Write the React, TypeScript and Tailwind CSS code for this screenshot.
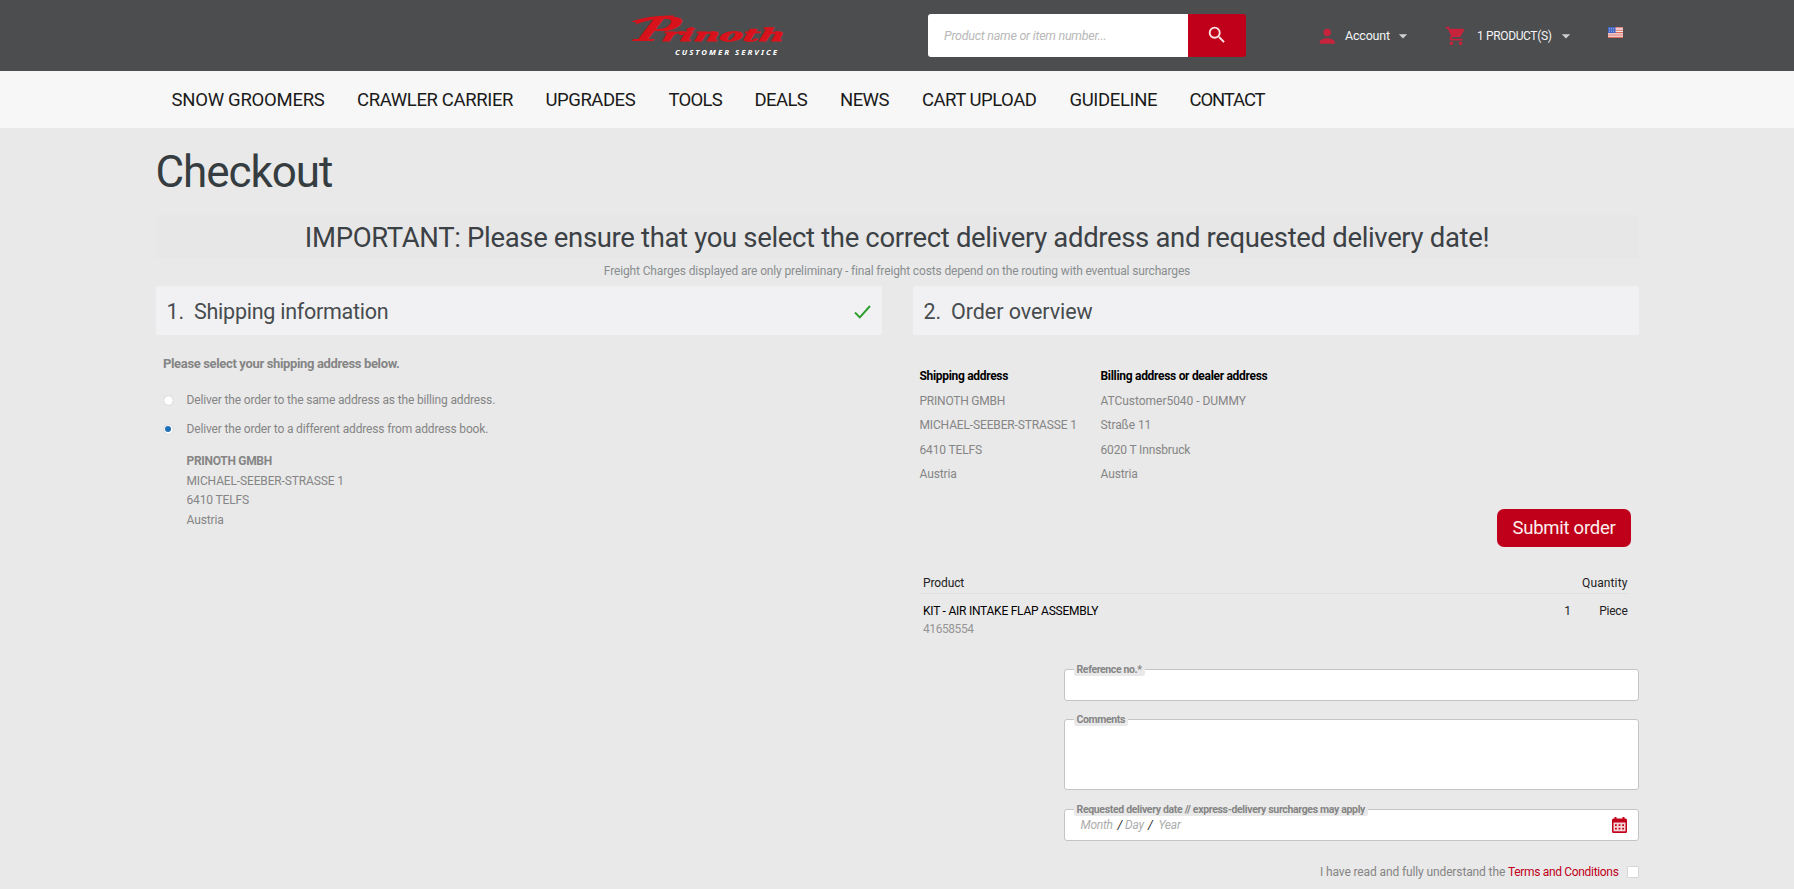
import { FC, ReactNode, useState } from "react";
import { MdArrowDropDown, MdPerson, MdSearch, MdShoppingCart } from "react-icons/md";

interface StepHeaderProps {
    title: string;
    number: string;
    titleClass: string;
    done?: boolean;
}

interface FieldProps {
    label: string;
    labelClass: string;
    className: string;
    children?: ReactNode;
}

const menu = [
    { label: "SNOW GROOMERS", className: "w-[185.5px] tracking-[-0.014em]" },
    { label: "CRAWLER CARRIER", className: "w-[188.5px] tracking-[-0.020em]" },
    { label: "UPGRADES", className: "w-[123px] tracking-[-0.025em]" },
    { label: "TOOLS", className: "w-[86px] tracking-[-0.040em]" },
    { label: "DEALS", className: "w-[85.5px] tracking-[-0.033em]" },
    { label: "NEWS", className: "w-[82px] tracking-[-0.030em]" },
    { label: "CART UPLOAD", className: "w-[147.5px] tracking-[-0.027em]" },
    { label: "GUIDELINE", className: "w-[120px] tracking-[-0.020em]" },
    { label: "CONTACT", className: "w-[80px] tracking-[-0.060em]" },
];

const shippingAddress = [
    { text: "PRINOTH GMBH", className: "tracking-[-0.018em]" },
    { text: "MICHAEL-SEEBER-STRASSE 1", className: "tracking-[-0.012em]" },
    { text: "6410 TELFS", className: "tracking-[-0.012em]" },
    { text: "Austria", className: "tracking-[-0.010em]" },
];

const billingAddress = [
    { text: "ATCustomer5040 - DUMMY", className: "tracking-[-0.003em]" },
    { text: "Straße 11", className: "tracking-[-0.006em]" },
    { text: "6020 T Innsbruck", className: "tracking-[-0.012em]" },
    { text: "Austria", className: "tracking-[-0.010em]" },
];

const Logo: FC = () => (
    <svg width="160" height="58" viewBox="0 -14 160 58" className="shrink-0">
        <g fill="#d8121a">
            <path d="M1 7.500C14 3 28 1 44 1.500L43 4C28 3.800 16 6.500 6 10.500L6.500 8.500Z" />
            <text transform="translate(3 26.500) skewX(-24)" textLength="40" lengthAdjust="spacingAndGlyphs" fontFamily="DejaVu Serif" fontWeight="700" fontStyle="italic" fontSize="33">P</text>
            <text transform="translate(31 26.500) skewX(-12)" textLength="123" lengthAdjust="spacingAndGlyphs" fontFamily="DejaVu Serif" fontWeight="700" fontStyle="italic" fontSize="17.500" stroke="#d8121a" strokeWidth=".8">rinoth</text>
        </g>
        <text x="45" y="41" textLength="102" fontFamily="Noto Sans" fontWeight="700" fontStyle="italic" fontSize="7.800" fill="#fff">CUSTOMER SERVICE</text>
    </svg>
);

const Flag: FC = () => (
    <svg width="15" height="11" viewBox="0 0 15 11" className="mt-[27px]">
        <rect width="15" height="11" fill="#f3e6e4" />
        <path d="M0 .8H15M0 3.2H15M0 5.6H15M0 8H15M0 10.4H15" stroke="#dd6a62" strokeWidth="1.1" />
        <rect width="7.5" height="6" fill="#4467c4" />
        <path d="M1 1.5H7M1 3H7M1 4.5H7" stroke="#a9baf0" strokeWidth=".6" strokeDasharray="1 1" />
    </svg>
);

const CalendarIcon: FC = () => (
    <svg width="15" height="16" viewBox="0 0 15 16">
        <path d="M2.500 0h2v1.500h6V0h2v1.500h1A1.500 1.500 0 0 1 15 3v11.500a1.500 1.500 0 0 1-1.500 1.500h-12A1.500 1.500 0 0 1 0 14.500V3a1.500 1.500 0 0 1 1.500-1.500h1Z" fill="#c1001a" />
        <rect x="1.500" y="5.500" width="12" height="8.800" fill="#f6d5d8" />
        <path d="M3 8.200h9M3 11.600h9" stroke="#c1001a" strokeWidth="1.800" strokeDasharray="1.800 1.800" />
    </svg>
);

const StepHeader: FC<StepHeaderProps> = ({ title, number, titleClass, done }) => (
    <div className="flex h-[49px] items-center rounded-[2px] bg-[#f1f1f3] pt-[2px] pr-[11px] pl-[11px] text-[21.5px] leading-[47px] text-[#474c4f]">
        <span className="w-[27.5px]">{number}</span>
        <h2 className={titleClass}>{title}</h2>
        {done && (
            <svg width="17" height="14" viewBox="0 0 17 14" className="ml-auto">
                <path d="M1 7.500L5.800 12.300L16 1" fill="none" stroke="#2a9d2a" strokeWidth="1.900" />
            </svg>
        )}
    </div>
);

const Field: FC<FieldProps> = ({ label, labelClass, className, children }) => (
    <div className={`relative rounded-[3px] border border-[#c4c4c4] bg-white ${className}`}>
        <label className={`absolute -top-[7px] left-[9px] rounded-[2px] bg-[#e9e9e9] px-[3px] text-[10.5px] leading-[13px] font-bold whitespace-nowrap text-[#858585] ${labelClass}`}>{label}</label>
        {children}
    </div>
);

const App: FC = () => {
    const [delivery, setDelivery] = useState("different");

    const radio = (value: string) => (
        <button
            title={value}
            onClick={() => setDelivery(value)}
            className="mr-[14px] ml-[8px] flex size-[9px] items-center justify-center rounded-full bg-white shadow-[0_0_1px_#999]">
            {delivery === value && <span className="size-[6px] rounded-full bg-[#1f6fb8]" />}
        </button>
    );

    return (
        <div className="h-[889px] w-[1794px] overflow-hidden bg-[#e9e9e9] font-['Roboto',sans-serif] text-[12px] text-[#858585]">
            <header className="flex h-[71px] bg-[#4b4d4f] pl-[630px] text-[#f4f4f4]">
                <Logo />
                <form className="mt-[14px] ml-[138px] flex h-[43px] w-[318px] overflow-hidden rounded-[3px]">
                    <input placeholder="Product name or item number..." className="w-[260px] bg-white pt-[2px] pl-4 text-[12.5px] tracking-[-0.021em] text-[#555] italic outline-none placeholder:text-[#b8b8b8]" />
                    <button type="button" title="Search" className="flex flex-1 items-center justify-center bg-[#c0001a]">
                        <MdSearch size={22} className="-mt-[2px] -ml-[1px] text-[#fbe4e6]" />
                    </button>
                </form>
                <div className="ml-[70px] flex h-[72px] items-center">
                    <MdPerson size={22.500} className="text-[#c8233c]" />
                    <span className="ml-[6.500px] w-[48px] text-[12.5px] tracking-[-0.015em]">Account</span>
                    <MdArrowDropDown size={20} className="text-[#d0d0d0]" />
                </div>
                <div className="ml-[32px] flex h-[72px] items-center">
                    <MdShoppingCart size={22} className="text-[#c8233c]" />
                    <span className="ml-[10px] w-[79px] tracking-[-0.030em]">1 PRODUCT(S)</span>
                    <MdArrowDropDown size={20} className="text-[#d0d0d0]" />
                </div>
                <div className="ml-[32px]">
                    <Flag />
                </div>
            </header>

            <nav className="flex h-[57px] bg-[#f7f7f7] pl-[171.500px] text-[18.5px] leading-[59px] whitespace-nowrap text-[#1a1a1a]">
                {menu.map((item) => (
                    <a key={item.label} href="#" className={item.className}>{item.label}</a>
                ))}
            </nav>

            <main className="mx-auto w-[1483px]">
                <h1 className="pt-[17px] text-[44px] leading-[54px] tracking-[-0.024em] text-[#353d41]">Checkout</h1>
                <div className="mt-4 h-[43px] bg-[#e7e7e7] text-center text-[27.5px] leading-[45px] tracking-[-0.0125em] whitespace-nowrap text-[#3c4145]">
                    IMPORTANT: Please ensure that you select the correct delivery address and requested delivery date!
                </div>
                <p className="h-[28px] text-center leading-[27px] tracking-[-0.012em] text-[#8a8e90]">
                    Freight Charges displayed are only preliminary - final freight costs depend on the routing with eventual surcharges
                </p>

                <div className="grid grid-cols-2 gap-[31px]">
                    <section>
                        <StepHeader number="1." title="Shipping information" titleClass="tracking-[-0.012em]" done />
                        <p className="mt-[19px] pl-[7.500px] text-[13px] leading-5 font-bold tracking-[-0.027em]">Please select your shipping address below.</p>
                        <div className="mt-4 flex items-center leading-5">
                            {radio("same")}
                            <span className="tracking-[-0.013em]">Deliver the order to the same address as the billing address.</span>
                        </div>
                        <div className="mt-[9px] flex items-center leading-5">
                            {radio("different")}
                            <span className="tracking-[-0.013em]">Deliver the order to a different address from address book.</span>
                        </div>
                        <div className="mt-[13px] pl-[31px] leading-[19.500px]">
                            <p className="font-bold tracking-[-0.025em]">PRINOTH GMBH</p>
                            {shippingAddress.slice(1).map((line) => (
                                <p key={line.text} className={line.className}>{line.text}</p>
                            ))}
                        </div>
                    </section>

                    <section>
                        <StepHeader number="2." title="Order overview" titleClass="tracking-[-0.003em]" />
                        <div className="mt-[29px] flex pl-[7px] leading-[24.500px]">
                            <div className="w-[181px]">
                                <p className="font-bold tracking-[-0.026em] text-black">Shipping address</p>
                                {shippingAddress.map((line) => (
                                    <p key={line.text} className={line.className}>{line.text}</p>
                                ))}
                            </div>
                            <div>
                                <p className="font-bold tracking-[-0.025em] text-black">Billing address or dealer address</p>
                                {billingAddress.map((line) => (
                                    <p key={line.text} className={line.className}>{line.text}</p>
                                ))}
                            </div>
                        </div>
                        <div className="mt-[22px] flex justify-end pr-[7.500px]">
                            <button className="h-[38px] w-[134px] rounded-[7px] bg-[#c0001a] pt-[2px] text-[18.5px] tracking-[-0.014em] text-[#fdeeee]">Submit order</button>
                        </div>
                        <div className="mt-[26px] pr-[11px] pl-[7px] leading-5 text-[#222]">
                            <div className="flex justify-between border-b border-[#e0e0e0] pl-[3.500px]">
                                <span className="tracking-[-0.010em]">Product</span>
                                <span className="tracking-[0.01em]">Quantity</span>
                            </div>
                            <div className="mt-[7px] flex pl-[3.500px]">
                                <span className="flex-1 tracking-[-0.020em] text-black">KIT - AIR INTAKE FLAP ASSEMBLY</span>
                                <span className="w-[35px]">1</span>
                                <span className="tracking-[-0.02em]">Piece</span>
                            </div>
                            <p className="-mt-px pl-[3.500px] leading-[18px] tracking-[-0.035em] text-[#959595]">41658554</p>
                        </div>
                        <div className="mt-[31px] ml-[151px] flex flex-col gap-[18.500px]">
                            <Field label="Reference no.*" labelClass="tracking-[-0.036em]" className="h-8" />
                            <Field label="Comments" labelClass="tracking-[-0.036em]" className="h-[71px]" />
                            <Field label="Requested delivery date // express-delivery surcharges may apply" labelClass="tracking-[-0.032em]" className="flex h-8 items-center pr-[11px] pl-4 leading-5">
                                <div className="flex flex-1 text-[#adadad] italic">
                                    <span className="w-[37px] tracking-[-0.02em]">Month</span>
                                    <span className="w-[7.500px] text-[#222]">/</span>
                                    <span className="w-[23px] tracking-[-0.02em]">Day</span>
                                    <span className="w-[10.500px] text-[#222]">/</span>
                                    <span className="tracking-[-0.02em]">Year</span>
                                </div>
                                <CalendarIcon />
                            </Field>
                        </div>
                        <div className="mt-[21px] flex items-center justify-end leading-5">
                            <span className="tracking-[-0.010em]">I have read and fully understand the&nbsp;</span>
                            <a href="#" className="tracking-[-0.0275em] text-[#c0001a]">Terms and Conditions</a>
                            <span className="ml-2 size-3 rounded-[1px] border border-[#d6d6d6] bg-white" />
                        </div>
                    </section>
                </div>
            </main>
        </div>
    );
};

export default App;
